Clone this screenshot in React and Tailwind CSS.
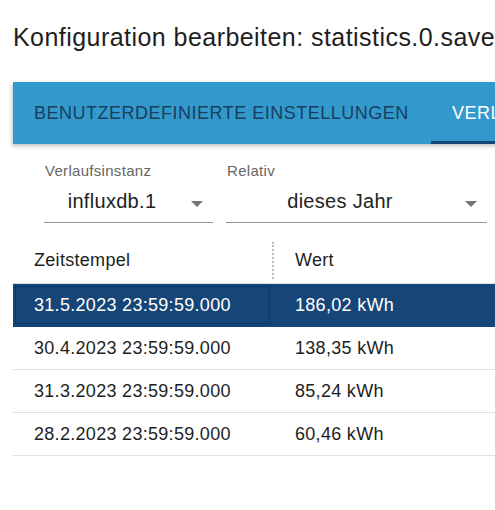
import React from "react";

const rows = [
  { ts: "31.5.2023 23:59:59.000", val: "186,02 kWh", selected: true },
  { ts: "30.4.2023 23:59:59.000", val: "138,35 kWh" },
  { ts: "31.3.2023 23:59:59.000", val: "85,24 kWh" },
  { ts: "28.2.2023 23:59:59.000", val: "60,46 kWh" },
];

const Arrow = () => (
  <svg width="12" height="6" viewBox="0 0 12 6" className="absolute right-[10px] top-[21px]">
    <path d="M0 0h12L6 6z" fill="#757575" />
  </svg>
);

const Select = ({ label, value, width }) => (
  <div className={`flex flex-col shrink-0 ${width}`}>
    <span className="text-[15px] leading-[18px] text-[#666] pl-px">{label}</span>
    <div className="relative flex items-center h-[43px] border-b border-[#949494] pr-[33px]">
      <span className="flex-1 text-center text-[20px] text-[#222]">{value}</span>
      <Arrow />
    </div>
  </div>
);

export default function App() {
  return (
    <div
      className="w-[495px] h-[510px] overflow-hidden bg-white tracking-[0.3px]"
      style={{ fontFamily: '"Liberation Sans", Arial, sans-serif' }}
    >
      <h1 className="pl-[13px] pt-[22px] text-[25px] leading-[30px] tracking-[0.45px] text-[#1e1e1e] whitespace-nowrap">
        Konfiguration bearbeiten: statistics.0.save.Strom
      </h1>

      <div className="ml-[13px] mt-[30px] w-[560px] bg-white">
        {/* Tabs */}
        <div className="flex h-[62px] bg-[#3399cc] shadow-[-1px_2px_4px_rgba(0,0,0,0.25)]">
          <div className="w-[418px] shrink-0 flex items-center pl-[21px] text-[18px] tracking-[0.5px] text-[#173f5f] whitespace-nowrap">
            BENUTZERDEFINIERTE EINSTELLUNGEN
          </div>
          <div className="relative flex-1 flex items-center pl-[21px] text-[18px] tracking-[0.5px] text-white whitespace-nowrap">
            VERLAUFSDATEN
            <div className="absolute left-0 right-0 bottom-0 h-[3px] bg-[#164578]" />
          </div>
        </div>

        {/* Selects */}
        <div className="flex gap-[13px] pl-[31px] pt-[18px]">
          <Select label="Verlaufsinstanz" value="influxdb.1" width="w-[169px]" />
          <Select label="Relativ" value="dieses Jahr" width="w-[261px]" />
        </div>

        {/* Table */}
        <div className="mt-[14px] w-[482px] text-[18px] text-[#1e1e1e]">
          <div className="flex h-[47px] items-center border-b border-[#e0e0e0]">
            <div className="w-[259px] pl-[21px]">Zeitstempel</div>
            <div className="h-[37px] border-l-2 border-dotted border-[#bdbdbd]" />
            <div className="pl-[21px]">Wert</div>
          </div>
          {rows.map((r) => (
            <div
              key={r.ts}
              className={`flex h-[43px] items-center border-b ${
                r.selected ? "bg-[#164578] text-white border-[#164578]" : "border-[#e0e0e0]"
              }`}
            >
              <div
                className={`w-[259px] h-full flex items-center pl-[21px] ${
                  r.selected ? "outline-1 outline-dotted outline-[#0b2a4d] -outline-offset-[3px]" : ""
                }`}
              >
                {r.ts}
              </div>
              <div className="pl-[23px]">{r.val}</div>
            </div>
          ))}
        </div>
      </div>
    </div>
  );
}
